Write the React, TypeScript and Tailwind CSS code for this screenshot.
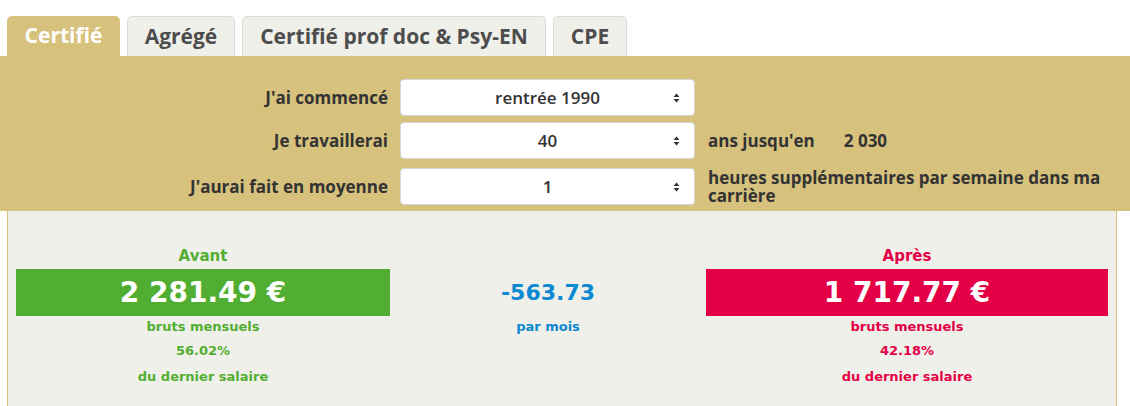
import { useState } from 'react'

const GOLD = 'bg-[#d6c17d]'

const tabs = [
  { label: 'Certifié', w: 'w-[113px]' },
  { label: 'Agrégé', w: 'w-[108px]' },
  { label: 'Certifié prof doc & Psy-EN', w: 'w-[304px]' },
  { label: 'CPE', w: 'w-[74px]' },
]

function Caret() {
  return (
    <svg width="7" height="10" viewBox="0 0 7 10" className="absolute right-[14px] top-1/2 -translate-y-1/2">
      <path d="M3.5 0.5 L6.5 4 L0.5 4 Z" fill="#333" />
      <path d="M3.5 9.5 L6.5 6 L0.5 6 Z" fill="#333" />
    </svg>
  )
}

function Select({ value }: { value: string }) {
  return (
    <div className="relative w-[295px] h-[37px] shrink-0 bg-white rounded-[4px] border border-[#d5d5d5] flex items-center justify-center text-[17px] font-semibold text-[#333]">
      {value}
      <Caret />
    </div>
  )
}

function Row({ label, value, children, extra = '' }: { label: string; value: string; children?: React.ReactNode; extra?: string }) {
  return (
    <div className={`flex items-center ${extra}`}>
      <div className="w-[388px] shrink-0 text-right text-[17px] font-bold text-[#333]">{label}</div>
      <div className="ml-[12px]">
        <Select value={value} />
      </div>
      <div className="ml-[13px] w-[400px] text-[17px] font-bold text-[#333] leading-[18px]">{children}</div>
    </div>
  )
}

function Result({ title, amount, pct, color, bg, width }: { title: string; amount: string; pct: string; color: string; bg: string; width: string }) {
  return (
    <div className={`${width} flex flex-col items-center ${color}`}>
      <div className="text-[15px] font-bold leading-[20px] mt-[35px]">{title}</div>
      <div className={`${bg} w-full h-[47px] mt-[3px] flex items-center justify-center text-white text-[28px] font-bold`}>
        {amount}
      </div>
      <div className="text-[13px] font-bold mt-[1px] leading-[20px]">bruts mensuels</div>
      <div className="text-[13px] font-bold mt-[4px] leading-[20px]">{pct}</div>
      <div className="text-[13px] font-bold mt-[6px] leading-[20px]">du dernier salaire</div>
    </div>
  )
}

export default function App() {
  const [active, setActive] = useState(0)

  return (
    <div className="w-[1130px] h-[406px] overflow-hidden bg-white" style={{ fontFamily: '"Open Sans", sans-serif' }}>
      {/* Tabs */}
      <div className="flex gap-[7px] pl-[7px] pt-[16px]">
        {tabs.map((t, i) => (
          <button
            key={t.label}
            onClick={() => setActive(i)}
            className={`${t.w} h-[40px] rounded-t-[5px] text-[21px] font-bold flex items-center justify-center ${
              i === active
                ? `${GOLD} text-white`
                : 'bg-[#f0f0ea] text-[#4d4d4d] border border-b-0 border-[#dcdcd4]'
            }`}
          >
            {t.label}
          </button>
        ))}
      </div>

      {/* Form panel */}
      <div className={`${GOLD} pt-[23px] pb-[6px] flex flex-col gap-[6px]`}>
        <Row label="J'ai commencé" value="rentrée 1990" />
        <Row label="Je travaillerai" value="40">
          ans jusqu'en<span className="ml-[29px]">2 030</span>
        </Row>
        <Row label="J'aurai fait en moyenne" value="1" extra="mt-[3px]">
          heures supplémentaires par semaine dans ma carrière
        </Row>
      </div>

      {/* Results */}
      <div
        className="ml-[7px] w-[1110px] h-[196px] bg-[#f0f0ea] border-x border-[#d6c17d] flex pl-[8px]"
        style={{ fontFamily: '"DejaVu Sans", sans-serif' }}
      >
        <Result
          title="Avant"
          amount="2 281.49 €"
          pct="56.02%"
          color="text-[#52ae32]"
          bg="bg-[#52ae32]"
          width="w-[374px]"
        />
        <div className="w-[316px] flex flex-col items-center text-[#0a88d2]">
          <div className="text-[22px] font-bold mt-[67px] leading-[30px]">-563.73</div>
          <div className="text-[13px] font-bold mt-[9px] leading-[20px]">par mois</div>
        </div>
        <Result
          title="Après"
          amount="1 717.77 €"
          pct="42.18%"
          color="text-[#e40046]"
          bg="bg-[#e40046]"
          width="w-[402px]"
        />
      </div>
    </div>
  )
}
